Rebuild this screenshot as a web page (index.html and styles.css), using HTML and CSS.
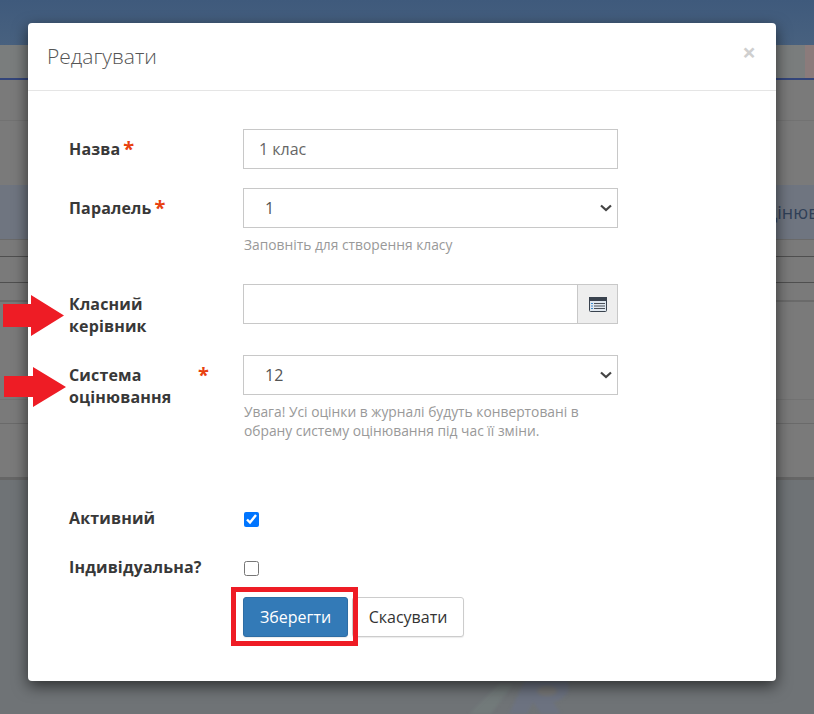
FILE: index.html
```html
<!DOCTYPE html>
<html lang="uk">
<head>
<meta charset="utf-8">
<title>Редагувати</title>
<link rel="stylesheet" href="styles.css">
</head>
<body>
<div class="stage">
  <div class="page">
    <div class="topbar"></div>
    <div class="subbar"><div class="subbar-tint"></div></div>
    <div class="row row-a"></div>
    <div class="row row-b"></div>
    <div class="row row-head">Оцінювання</div>
    <div class="row row-c"></div>
    <div class="row row-d"></div>
    <div class="row row-e"></div>
    <div class="row row-f"></div>
    <div class="row row-g"></div>
    <div class="row row-h"></div>
    <div class="footer">
      <svg class="watermark" viewBox="0 0 104 34" width="104" height="34"><path d="M0 34 L30 4 L44 4 L22 34Z" fill="#727a7a"/><path d="M40 34 L56 0 L98 0 C104 12 94 20 84 22 L92 34 L72 34 L64 22 L58 34Z" fill="#6c7280"/><ellipse cx="78" cy="11" rx="10" ry="5" fill="#757575"/></svg>
    </div>
  </div>

  <div class="modal">
    <div class="modal-header">
      <h4 class="modal-title">Редагувати</h4>
      <span class="close">×</span>
    </div>
    <form class="modal-body">
      <div class="field field-1">
        <label class="label"><span>Назва</span><b class="star">*</b></label>
        <div class="control"><input class="input" type="text" value="1 клас"></div>
      </div>
      <div class="field field-2">
        <label class="label"><span>Паралель</span><b class="star">*</b></label>
        <div class="control">
          <select class="input select"><option>1</option></select>
          <p class="help">Заповніть для створення класу</p>
        </div>
      </div>
      <div class="field field-3">
        <label class="label"><span>Класний керівник</span></label>
        <div class="control group">
          <input class="input group-input" type="text">
          <span class="addon">
            <svg width="18" height="15" viewBox="0 0 18 15"><rect x="0.5" y="0.5" width="17" height="14" rx="1" fill="#dfe7ef" stroke="#39424e"/><rect x="0" y="0" width="18" height="4" fill="#39424e"/><path d="M2 6.500h2M2 9h2M2 11.500h2" stroke="#3d8bd0" stroke-width="1"/><path d="M5 6.500h11M5 9h11M5 11.500h11" stroke="#4a5058" stroke-width="1"/></svg>
          </span>
        </div>
      </div>
      <div class="field field-4">
        <label class="label"><span>Система оцінювання</span><b class="star">*</b></label>
        <div class="control">
          <select class="input select"><option>12</option></select>
          <p class="help">Увага! Усі оцінки в журналі будуть конвертовані в обрану систему оцінювання під час її зміни.</p>
        </div>
      </div>
      <div class="check-row check-1">
        <label class="label">Активний</label>
        <input class="check" type="checkbox" checked>
      </div>
      <div class="check-row check-2">
        <label class="label">Індивідуальна?</label>
        <input class="check" type="checkbox">
      </div>
      <div class="actions">
        <button class="btn btn-primary" type="button">Зберегти</button>
        <button class="btn btn-default" type="button">Скасувати</button>
      </div>
    </form>
  </div>

  <svg class="arrow arrow-1" width="62" height="42" viewBox="0 0 62 42"><polygon points="0,9 28,9 28,0 61,20.500 28,41 28,32 0,32" fill="#ee1c25"/></svg>
  <svg class="arrow arrow-2" width="63" height="41" viewBox="0 0 63 41"><polygon points="0,9 29,9 29,0 62,20 29,40 29,30 0,30" fill="#ee1c25"/></svg>
  <div class="highlight"></div>
</div>
</body>
</html>
```

FILE: styles.css
```css
* { box-sizing: border-box; }
html, body { margin: 0; padding: 0; }
body { font-family: "Open Sans", sans-serif; }

.stage { position: relative; width: 814px; height: 714px; overflow: hidden; background: #7a7a7a; }

.page { display: flex; flex-direction: column; height: 714px; }
.topbar { height: 45px; background: linear-gradient(#3f5a7c, #48617f); }
.subbar { height: 35px; background: #7a7d7d; border-bottom: 2px solid #33457a; display: flex; justify-content: flex-end; }
.subbar-tint { width: 9px; background: #8b7b7b; }
.row { background: #7a7a7a; border-bottom: 1px solid #727272; }
.row-a { height: 41px; }
.row-b { height: 64px; border-bottom: 0; }
.row-head { height: 55px; background: #6f7580; color: #2f3f57; font-size: 18px; line-height: 55px; padding-left: 752px; overflow: hidden; white-space: nowrap; border-bottom: 1px solid #6a6a6a; }
.row-c { height: 17px; border-bottom: 1px solid #4f4f4f; }
.row-d { height: 26px; border-bottom: 1px solid #4f4f4f; }
.row-e { height: 19px; border-bottom: 2px solid #6a6a6a; }
.row-f { height: 98px; }
.row-g { height: 24px; border-bottom: 1px solid #6a6a6a; }
.row-h { height: 56px; border-bottom: 3px solid #666; }
.footer { flex: 1; background: #6f7376; display: flex; justify-content: flex-end; align-items: flex-end; padding-right: 241px; }
.watermark { display: block; filter: blur(1.5px); }

.modal { position: absolute; left: 28px; top: 23px; width: 748px; height: 658px; background: #fff; border-radius: 4px; box-shadow: 0 5px 15px rgba(0, 0, 0, .6); display: flex; flex-direction: column; }
.modal-header { height: 68px; border-bottom: 1px solid #e5e5e5; padding: 0 20px 0 19px; display: flex; justify-content: space-between; align-items: flex-start; }
.modal-title { margin: 0; padding-top: 18px; font-size: 21px; line-height: 30px; font-weight: 300; color: #555; }
.close { margin-top: 14px; font-size: 24px; line-height: 30px; font-weight: 700; color: #cfcfcf; }

.modal-body { padding: 38px 41px 0; flex: 1; }
.field { display: flex; align-items: flex-start; }
.field-1 { margin-bottom: 19px; }
.field-2 { margin-bottom: 30px; }
.field-3 { margin-bottom: 18px; }
.field-4 { margin-bottom: 0; }

.label { display: flex; align-items: flex-start; width: 174px; flex: none; padding: 9px 34px 0 0; font-size: 16px; line-height: 22px; font-weight: 700; color: #383838; letter-spacing: .15px; }
.star { font-size: 20px; line-height: 22px; color: #e8410f; margin-left: 3px; font-weight: 700; letter-spacing: 0; }
.control { width: 375px; }
.input { display: block; width: 100%; height: 40px; border: 1px solid #c8c8c8; border-radius: 0; background: #fff; padding: 0 15px; font-family: "Open Sans", sans-serif; font-size: 16px; color: #666; }
.select { padding: 0 16px 0 21px; color: #555; appearance: none; background-image: url("data:image/svg+xml,%3Csvg xmlns='http://www.w3.org/2000/svg' width='12' height='8' viewBox='0 0 12 8'%3E%3Cpath d='M1 1.500l5 4.500 5-4.500' fill='none' stroke='%23444' stroke-width='2.200'/%3E%3C/svg%3E"); background-repeat: no-repeat; background-position: right 5px center; }
.help { margin: 7px 0 0 1px; font-size: 13.800px; line-height: 19px; color: #999; }

.group { display: flex; }
.group-input { flex: 1; width: auto; min-width: 0; border-right: 0; }
.addon { width: 41px; height: 40px; background: #eee; border: 1px solid #c8c8c8; display: flex; align-items: center; justify-content: center; }

.check-row { display: flex; align-items: center; height: 30px; }
.check-row .label { padding: 0; }
.check-1 { margin-top: 63px; }
.check-2 { margin-top: 19px; }
.check { width: 15px; height: 15px; margin: 2px 0 0 1px; }

.actions { display: flex; gap: 4px; margin: 15px 0 0 174px; }
.btn { height: 40px; border-radius: 3px; font-family: "Open Sans", sans-serif; font-size: 16px; padding: 0; box-shadow: 0 1px 1px rgba(0, 0, 0, .08); }
.btn-primary { width: 105px; background: #337ab7; border: 1px solid #2e6da4; color: #fff; }
.btn-default { width: 112px; background: #fff; border: 1px solid #ccc; color: #333; }

.arrow { position: absolute; display: block; }
.arrow-1 { left: 3px; top: 295px; }
.arrow-2 { left: 4px; top: 367px; }
.highlight { position: absolute; left: 231px; top: 587px; width: 127px; height: 59px; border: 5px solid #ee1c25; }
```
